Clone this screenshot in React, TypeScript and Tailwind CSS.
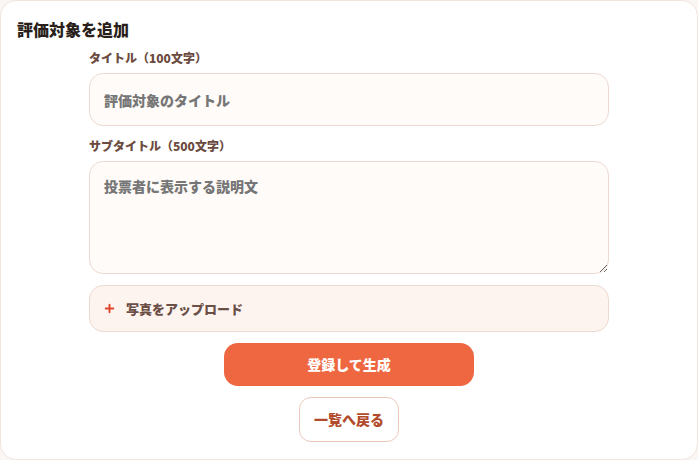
import { Plus } from "lucide-react";

const font = { fontFamily: '"Noto Sans CJK JP", "Noto Sans", sans-serif' };

export default function App() {
  return (
    <div className="h-[460px] w-[698px] bg-[#faf6f4]" style={font}>
      <div className="flex h-full flex-col rounded-[16px] border border-[#f1e5df] bg-white px-[16px] pt-[17px]">
        <h2 className="text-[16px] font-black leading-[22px] text-[#2a1f1b]">
          評価対象を追加
        </h2>

        <div className="ml-[72px] mt-[10px] flex w-[520px] flex-col">
          <label className="mb-[7px] text-[12px] font-black leading-[16px] text-[#6b4a40]">
            タイトル（100文字）
          </label>
          <input
            type="text"
            placeholder="評価対象のタイトル"
            className="h-[53px] rounded-[14px] border border-[#ecdad1] bg-[#fffbf9] px-[14px] text-[14px] font-black text-[#333] outline-none placeholder:text-[#767676]"
          />

          <label className="mb-[7px] mt-[12px] text-[12px] font-black leading-[16px] text-[#6b4a40]">
            サブタイトル（500文字）
          </label>
          <textarea
            placeholder="投票者に表示する説明文"
            className="h-[113px] rounded-[14px] border border-[#ecdad1] bg-[#fffbf9] px-[14px] pt-[14px] text-[14px] font-black leading-[20px] text-[#333] outline-none placeholder:text-[#767676]"
          />

          <button
            type="button"
            className="mt-[11px] flex h-[47px] items-center gap-[10px] rounded-[14px] border border-[#ecd9cf] bg-[#fdf4f0] px-[13px] text-[13px] font-black text-[#6b4f47]"
          >
            <Plus className="size-[13px] text-[#e0442a]" strokeWidth={3.5} />
            写真をアップロード
          </button>

          <div className="mt-[11px] flex flex-col items-center gap-[11px]">
            <button
              type="button"
              className="h-[43px] w-[250px] rounded-[14px] bg-[#ee6741] text-[14px] font-black text-white"
            >
              登録して生成
            </button>
            <button
              type="button"
              className="h-[45px] w-[100px] rounded-[12px] border border-[#ecc8bb] bg-white text-[14px] font-black text-[#b24c2c]"
            >
              一覧へ戻る
            </button>
          </div>
        </div>
      </div>
    </div>
  );
}
